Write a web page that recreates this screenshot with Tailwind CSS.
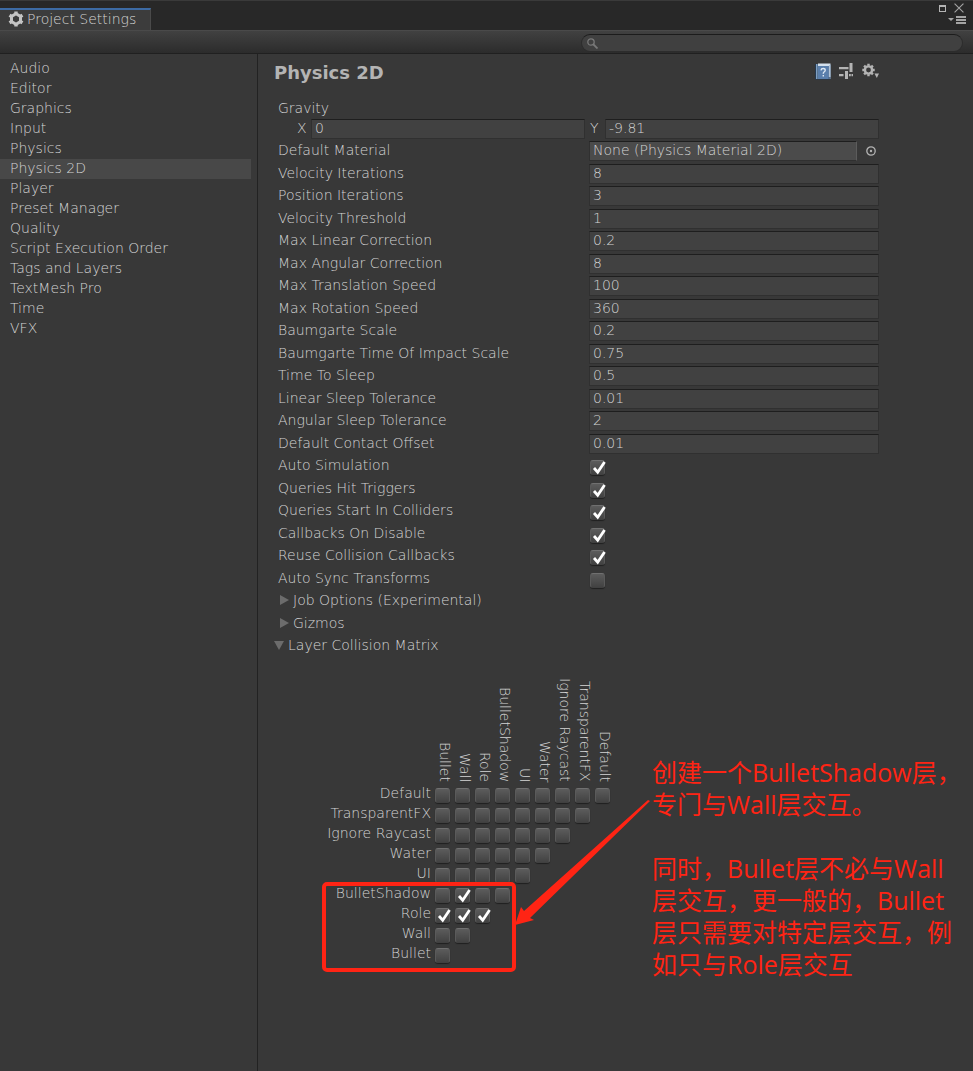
<!DOCTYPE html>
<html lang="zh">
<head>
<meta charset="utf-8">
<title>Project Settings</title>
<script src="https://cdn.jsdelivr.net/npm/@tailwindcss/browser@4"></script>
</head>
<body class="min-h-screen flex flex-col bg-[#383838] text-[#d4d4d4] text-[14px] leading-5 font-extralight font-['Verdana','DejaVu_Sans',sans-serif]">

<header class="flex items-end justify-between h-[30px] border-t border-[#3a3a3a] bg-[#282828]">
  <button class="flex items-center gap-[3px] h-[22px] w-[151px] pl-2 pb-0.5 border-t-2 border-r border-t-[#3d6ba5] border-r-[#4a4a4a] bg-[#3c3c3c] whitespace-nowrap">
    <svg class="w-4 h-4" viewBox="0 0 16 16" fill="none" stroke="#c4c4c4"><path stroke-width="3" d="M8 2.800l4.500 2.600v5.200L8 13.200l-4.500-2.600V5.400z"/><path stroke-width="3.400" d="M8 .4v2M8 13.600v2M1.500 4.200l2 1.200M12.500 10.600l2 1.200M1.500 11.800l2-1.200M12.500 5.400l2-1.200"/></svg>
    <span>Project Settings</span>
  </button>
  <div class="flex flex-col self-start items-end pr-[7px] pt-[2px] gap-[3px]">
    <div class="flex items-center gap-2 pr-[2px]">
      <button aria-label="Maximize"><svg class="block w-[7px] h-[7px]" viewBox="0 0 7 7"><path fill="#b4b4b4" d="M0 0h7v7H0zM1 2v4h5V2z" fill-rule="evenodd"/></svg></button>
      <button aria-label="Close"><svg class="block w-[10px] h-[10px]" viewBox="0 0 9 9"><path stroke="#a4a4a4" d="M.5.5l8 8M8.500.5l-8 8"/></svg></button>
    </div>
    <button aria-label="Window menu"><svg class="block w-[18px] h-2" viewBox="0 0 18 8"><path fill="#a4a4a4" d="M0 2h6L3 5zM8 0h10v2H8zM8 3h10v2H8zM8 6h10v2H8z"/></svg></button>
  </div>
</header>

<div class="flex justify-end items-end h-6 pr-[10px] pb-px border-t border-t-[#4a4a4a] border-b border-b-[#202020] bg-linear-to-b from-[#414141] to-[#2c2c2c]">
  <label class="flex items-center gap-1 w-[382px] h-[18px] pl-[5px] rounded-full border border-[#2c2c2c] border-t-[#1c1c1c] bg-[#404040]">
    <svg class="w-[11px] h-[11px]" viewBox="0 0 11 11" fill="none" stroke="#787878"><circle cx="4" cy="4" r="3.200" stroke-width="1.300"/><path stroke-width="1.800" d="M6.500 6.500l4 4"/></svg>
    <input aria-label="Search" class="grow min-w-0 h-4 bg-transparent outline-none">
  </label>
</div>

<div class="flex grow">
  <nav class="w-[258px] shrink-0 border-r border-[#222] pt-[5px] pr-[6px]">
    <ul id="nav"></ul>
  </nav>

  <main class="grow min-w-0 pl-4 pr-[94px] relative">
    <div class="flex items-center justify-between h-9">
      <h1 class="text-[18px] font-bold pt-0.5 text-[#b4b4b4]">Physics 2D</h1>
      <div class="flex items-center gap-2 pb-0.5">
        <button aria-label="Help"><svg class="block w-4 h-[17px]" viewBox="0 0 16 17"><path fill="#25394f" d="M0 1h15.500v15.500H0z"/><path fill="#7f9fc2" d="M1 1h1.600v15H1z"/><path fill="#d4e0ec" d="M3 .5h12.500V14h-2V3H3z"/><path fill="#8fa8c4" d="M14.500 2h1v14h-1z"/><path fill="#5a7fac" d="M3 3h10.800v13H3z"/><path fill="none" stroke="#dfe9f4" stroke-width="1.400" d="M6 7.300q.2-1.800 2.200-1.800 2 0 2 1.700 0 1.100-1.200 1.800-.7.500-.7 1.700M8.300 12v1.600"/></svg></button>
        <button aria-label="Presets"><svg class="block w-[15px] h-4" viewBox="0 0 15 16" fill="#b4b4b4"><path d="M0 4h9.500v2.200H0zM10.500 0h3v9h-3zM0 11h4.500v2.200H0zM6 8h3v8H6zM10 11h1.800v2.200H10zM12.500 11H14v2.200h-1.500z"/></svg></button>
        <button aria-label="Settings"><svg class="block w-[17px] h-4" viewBox="0 0 17 16" fill="none" stroke="#b4b4b4"><circle cx="6.500" cy="7" r="3.600" stroke-width="2.400"/><path stroke-width="2.400" d="M6.500.8v2M6.500 11.200v2M.3 7h2M10.700 7h2M2.100 2.600l1.500 1.500M9.400 9.900l1.500 1.500M2.100 11.400l1.500-1.500M9.400 4.100l1.500-1.500"/><path stroke="none" fill="#b4b4b4" d="M12.500 10.500h4.500l-2.200 4.500z"/></svg></button>
      </div>
    </div>

    <div role="group" aria-labelledby="gravity" class="pt-2 pl-1">
      <div id="gravity">Gravity</div>
      <div class="flex items-center h-[22px]">
        <label for="gx" class="w-[33px] pl-[19px] pb-0.5">X</label>
        <input id="gx" value="0" class="grow basis-0 min-w-0 h-5 px-[3px] pb-0.5 border border-[#303030] border-t-[#1e1e1e] bg-[#414141]">
        <label for="gy" class="w-5 pl-[5px] pb-0.5">Y</label>
        <input id="gy" value="-9.81" class="grow basis-0 min-w-0 h-5 px-[3px] pb-0.5 border border-[#303030] border-t-[#1e1e1e] bg-[#414141]">
      </div>
    </div>
    <div class="flex items-center h-[22px] pl-1">
      <label for="mat" class="w-[311px] shrink-0 pb-0.5">Default Material</label>
      <input id="mat" readonly value="None (Physics Material 2D)" class="grow min-w-0 h-5 px-[3px] pb-0.5 border border-[#303030] border-t-[#1e1e1e] border-r-[#5c5c5c] bg-[#4b4b4b]">
      <button aria-label="Select material" class="pl-[9px] pr-[3px]"><svg class="block w-[10px] h-[10px]" viewBox="0 0 10 10"><circle cx="5" cy="5" r="4.200" fill="none" stroke="#b4b4b4" stroke-width="1.300"/><circle cx="5" cy="5" r="1.200" fill="#b4b4b4"/></svg></button>
    </div>
    <div id="fields" class="pl-1"></div>
    <div class="pl-1">
      <button class="flex items-center h-[22px] gap-1 pl-[2px] pb-0.5"><svg class="w-[9px] h-[10px]" viewBox="0 0 9 10"><path fill="#6c6c6c" d="M0 0l9 5-9 5z"/></svg>Job Options (Experimental)</button>
      <button class="flex items-center h-[23px] gap-1 pl-[2px] pb-0.5"><svg class="w-[9px] h-[10px]" viewBox="0 0 9 10"><path fill="#6c6c6c" d="M0 0l9 5-9 5z"/></svg>Gizmos</button>
    </div>
    <button class="flex items-center h-[22px] gap-1 pb-0.5"><svg class="w-[10px] h-[9px]" viewBox="0 0 10 9"><path fill="#6c6c6c" d="M0 0h10L5 9z"/></svg>Layer Collision Matrix</button>

    <table class="mt-[15px] border-collapse">
      <thead><tr id="cols"><td class="w-[159px] p-0"></td></tr></thead>
      <tbody id="matrix"></tbody>
    </table>

    <svg class="absolute left-[64px] top-[740px] w-[340px] h-[182px] pointer-events-none" viewBox="322 794 340 182" aria-hidden="true">
      <rect x="324" y="884" width="190" height="86" rx="3" fill="none" stroke="#ff2414" stroke-width="4"/>
      <path fill="#ff2414" d="M515 925L521 907 524 911 648 800 650 801 530 918 534 920z"/>
    </svg>
    <div class="absolute left-[394px] top-[702px] w-[318px] text-[25px] leading-8 font-normal text-[#ff2414] whitespace-nowrap font-['Open_Sans','Noto_Sans_CJK_SC',sans-serif]">
      <p>创建一个BulletShadow层，<br>专门与Wall层交互。</p>
      <p class="mt-8">同时，Bullet层不必与Wall<br>层交互，更一般的，Bullet<br>层只需要对特定层交互，例<br>如只与Role层交互</p>
    </div>
  </main>
</div>

<script>
const check = "block appearance-none w-[15px] h-[15px] rounded-[3px] border border-[#707070] border-x-[#5a5a5a] border-b-[#404040] bg-linear-to-b from-[#5c5c5c] to-[#424242] shadow-[0_1px_1px_#202020]";
const tick = '<svg class="absolute left-[2px] top-0 w-[15px] h-[15px] pointer-events-none" viewBox="0 0 15 15"><path fill="none" stroke="#fff" stroke-width="2.800" d="M2 8l3.700 4.200L12.600 2"/></svg>';
const box = (id, on, label) => `<span class="relative block w-[15px] h-[15px]"><input type="checkbox" id="${id}" ${label ? `aria-label="${label}"` : ""} ${on ? "checked" : ""} class="${check}">${on ? tick : ""}</span>`;

document.getElementById("nav").innerHTML = ["Audio","Editor","Graphics","Input","Physics","Physics 2D","Player","Preset Manager","Quality","Script Execution Order","Tags and Layers","TextMesh Pro","Time","VFX"]
  .map(n => `<li><a href="#" class="block h-5 pl-[10px] leading-[18px] ${n === "Physics 2D" ? "bg-[#484848]" : ""}">${n}</a></li>`).join("");

const fields = [["Velocity Iterations","8"],["Position Iterations","3"],["Velocity Threshold","1"],["Max Linear Correction","0.2"],["Max Angular Correction","8"],["Max Translation Speed","100"],["Max Rotation Speed","360"],["Baumgarte Scale","0.2"],["Baumgarte Time Of Impact Scale","0.75"],["Time To Sleep","0.5"],["Linear Sleep Tolerance","0.01"],["Angular Sleep Tolerance","2"],["Default Contact Offset","0.01"],["Auto Simulation",true],["Queries Hit Triggers",true],["Queries Start In Colliders",true],["Callbacks On Disable",true],["Reuse Collision Callbacks",true],["Auto Sync Transforms",false]];
document.getElementById("fields").innerHTML = fields.map(([n, v], i) => {
  const control = typeof v === "string"
    ? `<input id="f${i}" value="${v}" class="grow min-w-0 h-5 px-[3px] pb-0.5 border border-[#303030] border-t-[#1e1e1e] bg-[#414141]">`
    : `<span class="pl-px pt-[3px]">${box("f" + i, v)}</span>`;
  return `<div class="flex items-center ${i % 2 ? "h-[22px]" : "h-[23px]"}"><label for="f${i}" class="w-[311px] shrink-0 pb-0.5">${n}</label>${control}</div>`;
}).join("");

const layers = ["Default","TransparentFX","Ignore Raycast","Water","UI","BulletShadow","Role","Wall","Bullet"];
const cols = [...layers].reverse();
const on = { BulletShadow: ["Wall"], Role: ["Bullet","Wall","Role"] };
document.getElementById("cols").innerHTML += cols.map(n => `<th scope="col" class="w-5 h-[112px] p-0 font-extralight align-bottom"><span class="flex justify-end w-5 h-[112px] pb-0.5 leading-4 whitespace-nowrap [writing-mode:vertical-rl]">${n}</span></th>`).join("");
document.getElementById("matrix").innerHTML = layers.map((r, i) =>
  `<tr class="h-5"><th scope="row" class="p-0 pr-[2px] font-extralight text-right leading-4 pb-0.5 whitespace-nowrap">${r}</th>` +
  cols.slice(0, 9 - i).map((c, j) => `<td class="p-0 pl-[2px] pt-[3px]">${box("m" + i + "-" + j, (on[r] || []).includes(c), r + " / " + c)}</td>`).join("") + "</tr>").join("");
</script>
</body>
</html>
